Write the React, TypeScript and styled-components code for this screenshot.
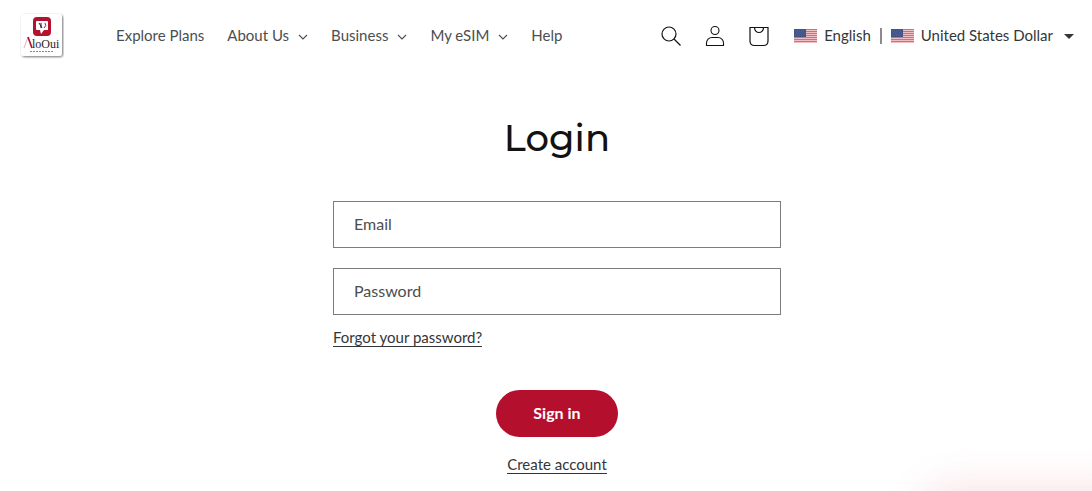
import React, { useState } from "react";
import styled, { createGlobalStyle } from "styled-components";

const GlobalStyle = createGlobalStyle`
  *, *::before, *::after { box-sizing: border-box; }
  body {
    margin: 0;
    background: #fff;
    color: #333638;
    font-family: Lato, "Liberation Sans", sans-serif;
    font-size: 15px;
    line-height: 20px;
    overflow-x: hidden;
  }
  button, input { font: inherit; color: inherit; }
`;

const Header = styled.header`
  display: flex;
  align-items: center;
  height: 72px;
  padding: 0 18px 0 20px;
`;

const LogoLink = styled.a`
  display: block;
  width: 44px;
  height: 46px;
  margin-right: 52px;
  flex: none;
`;

const Nav = styled.nav`
  display: flex;
  gap: 23px;
  flex: 1;
  padding-bottom: 2px;
  white-space: nowrap;
`;

const navItem = `
  display: flex;
  align-items: center;
  gap: 9px;
  padding: 0;
  border: 0;
  background: none;
  color: #4b4e50;
  text-decoration: none;
  cursor: pointer;
`;
const NavLink = styled.a`${navItem}`;
const NavButton = styled.button`${navItem}`;

const Caret = styled.svg`
  width: 10px;
  height: 6px;
  margin-top: 4px;
`;

const Actions = styled.div`
  display: flex;
  gap: 22px;
  margin-right: 24px;
`;

const IconButton = styled.button`
  display: block;
  width: 22px;
  height: 22px;
  padding: 0;
  border: 0;
  background: none;
  cursor: pointer;
  svg { display: block; }
`;

const Locale = styled.button`
  display: flex;
  align-items: center;
  gap: 7px;
  padding: 0;
  border: 0;
  background: none;
  white-space: nowrap;
  cursor: pointer;
`;

const LocaleText = styled.span`
  padding-bottom: 2px;
`;

const Divider = styled.span`
  width: 2px;
  height: 16px;
  margin: 0 2px;
  background: #8b8b8b;
`;

const Triangle = styled.span`
  margin-left: 4px;
  border: 5px solid transparent;
  border-top-color: #333638;
  border-bottom: 0;
`;

const Main = styled.main`
  display: flex;
  flex-direction: column;
  align-items: center;
  padding: 40px 0 16px 22px;
`;

const Title = styled.h1`
  margin: 0 0 37px;
  color: #121212;
  font-family: Montserrat, Inter, sans-serif;
  font-size: 37px;
  line-height: 52px;
  font-weight: 500;
`;

const Form = styled.form`
  display: flex;
  flex-direction: column;
  align-items: center;
  width: 100%;
  max-width: 448px;
`;

const Input = styled.input`
  width: 100%;
  height: 47px;
  margin-bottom: ${(p: { $gap: number }) => p.$gap}px;
  padding: 0 20px 2px;
  border: 1px solid #7c7c7c;
  border-radius: 0;
  background: #fff;
  font-size: 16px;
  &::placeholder { color: #4b4e50; opacity: 1; }
`;

const TextLink = styled.a`
  border-bottom: 1px solid #333638;
  color: #333638;
  line-height: 18px;
  text-decoration: none;
`;

const ForgotLink = styled(TextLink)`
  align-self: flex-start;
`;

const Submit = styled.button`
  width: 122px;
  height: 47px;
  margin: 43px 0 18px;
  padding: 0 0 2px;
  border: 0;
  border-radius: 40px;
  background: #b50f2e;
  color: #fff;
  font-size: 16px;
  font-weight: 700;
  cursor: pointer;
`;

const CornerGlow = styled.div`
  position: fixed;
  right: -40px;
  bottom: -70px;
  width: 200px;
  height: 66px;
  border-radius: 16px;
  box-shadow: 0 0 40px 8px rgba(220, 50, 80, 0.15);
  pointer-events: none;
`;

const Logo = () => (
  <svg width="44" height="46" viewBox="0 0 44 46" aria-hidden="true">
    <defs>
      <filter id="card" x="-10%" y="-10%" width="130%" height="130%">
        <feDropShadow dx="1" dy="1" stdDeviation="1" floodOpacity="0.55" />
      </filter>
    </defs>
    <rect x="1" y="1" width="41" height="42" rx="3" fill="#fff" filter="url(#card)" />
    <rect x="13" y="4" width="18" height="19" rx="4" fill="#b3132f" />
    <path d="M17 8h10a1 1 0 0 1 1 1v8h-4l-3 4-1-4h-3a1 1 0 0 1-1-1v-7a1 1 0 0 1 1-1z" fill="#fff" />
    <path d="M19 10l3 5M21 10v5" fill="none" stroke="#281a22" />
    <path d="M25 10q2 3-1 5" fill="none" stroke="#b3132f" />
    <path d="M4 35l4-11" fill="none" stroke="#e79aa6" strokeWidth="0.8" />
    <path d="M8 24l4 11" fill="none" stroke="#b3132f" strokeWidth="1.7" />
    <text x="12" y="35" fontFamily="Liberation Serif, serif" fontSize="12" fill="#29232a">loOui</text>
    <path d="M10 38.500h23" stroke="#888" strokeDasharray="2 1" />
  </svg>
);

const Flag = () => (
  <svg width="23" height="14" viewBox="0 0 23 14" aria-hidden="true">
    <rect width="23" height="14" fill="#f4d5d8" />
    {[0, 2, 4, 6, 8, 10, 12].map((y) => (
      <rect key={y} y={y} width="23" height="1.200" fill="#dc6a77" />
    ))}
    <rect width="12" height="8" fill="#41548a" />
    <path d="M1 2h10M2 4h9M1 6h10" stroke="#6474a1" strokeWidth="0.6" strokeDasharray="1 1" />
  </svg>
);

const ChevronDown = () => (
  <Caret viewBox="0 0 10 6" aria-hidden="true">
    <path d="M1 1l4 4 4-4" fill="none" stroke="#4b4e50" strokeWidth="1.100" />
  </Caret>
);

const NAV = [
  { label: "Explore Plans", menu: false },
  { label: "About Us", menu: true },
  { label: "Business", menu: true },
  { label: "My eSIM", menu: true },
  { label: "Help", menu: false },
];

export default function App() {
  const [email, setEmail] = useState("");
  const [password, setPassword] = useState("");
  return (
    <>
      <GlobalStyle />
      <Header>
        <LogoLink href="#" aria-label="AloOui"><Logo /></LogoLink>
        <Nav>
          {NAV.map(({ label, menu }) =>
            menu ? (
              <NavButton key={label} type="button" aria-haspopup="true">{label}<ChevronDown /></NavButton>
            ) : (
              <NavLink key={label} href="#">{label}</NavLink>
            )
          )}
        </Nav>
        <Actions>
          <IconButton type="button" aria-label="Search">
            <svg width="22" height="22" viewBox="0 0 22 22" fill="none" stroke="#121212" strokeWidth="1.200">
              <circle cx="9" cy="9" r="7" /><path d="M14 14l6.500 6.500" />
            </svg>
          </IconButton>
          <IconButton type="button" aria-label="Account">
            <svg width="22" height="22" viewBox="0 0 22 22" fill="none" stroke="#121212" strokeWidth="1.100">
              <circle cx="11" cy="5.500" r="4" />
              <path d="M2.500 20.500v-2.500c0-3 2.500-5.500 5.500-5.500h6c3 0 5.500 2.500 5.500 5.500v2.500z" />
            </svg>
          </IconButton>
          <IconButton type="button" aria-label="Cart">
            <svg width="22" height="22" viewBox="0 0 22 22" fill="none" stroke="#121212" strokeWidth="1.200">
              <path d="M2 2.500h18v13.500q0 4.500-4.500 4.500h-9q-4.500 0-4.500-4.500z" />
              <path d="M6.500 2.500a4.500 5 0 0 0 9 0" />
            </svg>
          </IconButton>
        </Actions>
        <Locale type="button" aria-haspopup="true">
          <Flag /><LocaleText>English</LocaleText><Divider /><Flag /><LocaleText>United States Dollar</LocaleText><Triangle />
        </Locale>
      </Header>
      <Main>
        <Title>Login</Title>
        <Form onSubmit={(e) => e.preventDefault()}>
          <Input $gap={20} type="email" aria-label="Email" placeholder="Email" value={email} onChange={(e) => setEmail(e.target.value)} />
          <Input $gap={13} type="password" aria-label="Password" placeholder="Password" value={password} onChange={(e) => setPassword(e.target.value)} />
          <ForgotLink href="#">Forgot your password?</ForgotLink>
          <Submit type="submit">Sign in</Submit>
          <TextLink href="#">Create account</TextLink>
        </Form>
      </Main>
      <CornerGlow />
    </>
  );
}
